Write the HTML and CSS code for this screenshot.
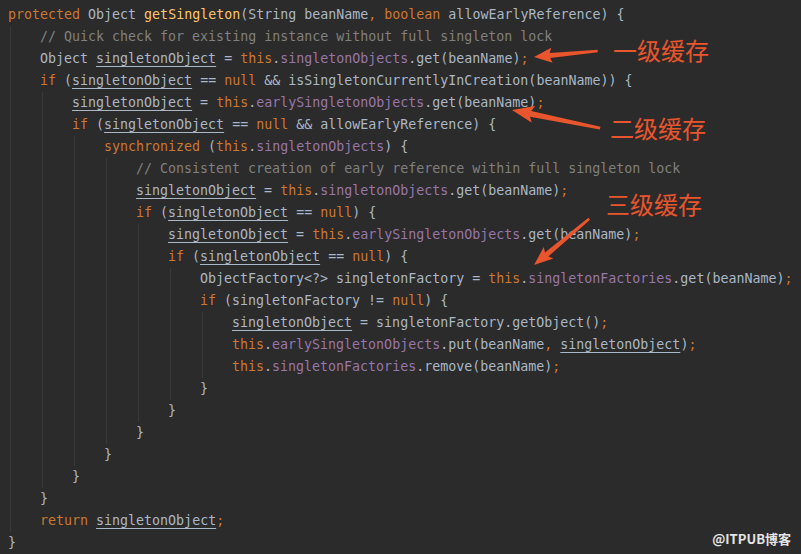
FILE: index.html
```html
<!DOCTYPE html>
<html lang="en">

<head>
    <meta charset="UTF-8">
    <meta name="viewport" content="width=device-width, initial-scale=1.0">
    <title>getSingleton</title>
    <link rel="stylesheet" href="styles.css">
</head>

<body>

    <div class="editor">
        <div class="code">
            <div class="line"><span class="kw">protected</span> Object <span class="fn">getSingleton</span>(String beanName<span class="kw">,</span> <span class="kw">boolean</span> allowEarlyReference) {</div>
            <div class="block">
                <div class="line"><span class="cm">// Quick check for existing instance without full singleton lock</span></div>
                <div class="line">Object <span class="var">singletonObject</span> = <span class="kw">this</span>.<span class="fd">singletonObjects</span>.get(beanName)<span class="kw">;</span></div>
                <div class="line"><span class="kw">if</span> (<span class="var">singletonObject</span> == <span class="kw">null</span> &amp;&amp; isSingletonCurrentlyInCreation(beanName)) {</div>
                <div class="block">
                    <div class="line"><span class="var">singletonObject</span> = <span class="kw">this</span>.<span class="fd">earlySingletonObjects</span>.get(beanName)<span class="kw">;</span></div>
                    <div class="line"><span class="kw">if</span> (<span class="var">singletonObject</span> == <span class="kw">null</span> &amp;&amp; allowEarlyReference) {</div>
                    <div class="block">
                        <div class="line"><span class="kw">synchronized</span> (<span class="kw">this</span>.<span class="fd">singletonObjects</span>) {</div>
                        <div class="block">
                            <div class="line"><span class="cm">// Consistent creation of early reference within full singleton lock</span></div>
                            <div class="line"><span class="var">singletonObject</span> = <span class="kw">this</span>.<span class="fd">singletonObjects</span>.get(beanName)<span class="kw">;</span></div>
                            <div class="line"><span class="kw">if</span> (<span class="var">singletonObject</span> == <span class="kw">null</span>) {</div>
                            <div class="block">
                                <div class="line"><span class="var">singletonObject</span> = <span class="kw">this</span>.<span class="fd">earlySingletonObjects</span>.get(beanName)<span class="kw">;</span></div>
                                <div class="line"><span class="kw">if</span> (<span class="var">singletonObject</span> == <span class="kw">null</span>) {</div>
                                <div class="block">
                                    <div class="line">ObjectFactory&lt;?&gt; singletonFactory = <span class="kw">this</span>.<span class="fd">singletonFactories</span>.get(beanName)<span class="kw">;</span></div>
                                    <div class="line"><span class="kw">if</span> (singletonFactory != <span class="kw">null</span>) {</div>
                                    <div class="block">
                                        <div class="line"><span class="var">singletonObject</span> = singletonFactory.getObject()<span class="kw">;</span></div>
                                        <div class="line"><span class="kw">this</span>.<span class="fd">earlySingletonObjects</span>.put(beanName<span class="kw">,</span> <span class="var">singletonObject</span>)<span class="kw">;</span></div>
                                        <div class="line"><span class="kw">this</span>.<span class="fd">singletonFactories</span>.remove(beanName)<span class="kw">;</span></div>
                                    </div>
                                    <div class="line">}</div>
                                </div>
                                <div class="line">}</div>
                            </div>
                            <div class="line">}</div>
                        </div>
                        <div class="line">}</div>
                    </div>
                    <div class="line">}</div>
                </div>
                <div class="line">}</div>
                <div class="line"><span class="kw">return</span> <span class="var">singletonObject</span><span class="kw">;</span></div>
            </div>
            <div class="line">}</div>
        </div>

        <!-- annotation arrows -->
        <svg class="arrows" width="801" height="554" viewBox="0 0 801 554">
            <polygon transform="translate(534 57) rotate(-5.4)" points="0,0 18,-7.5 16,-2.6 64,-1.3 64,1.3 16,2.6 18,7.5" />
            <polygon transform="translate(512 110) rotate(11.6)" points="0,0 22,-8.5 19,-3 90,-1.5 90,1.5 19,3 22,8.5" />
            <polygon transform="translate(534 265) rotate(-39.9)" points="0,0 19,-7.5 16.5,-2.6 72,-1.3 72,1.3 16.5,2.6 19,7.5" />
        </svg>
        <div class="note note-1">一级缓存</div>
        <div class="note note-2">二级缓存</div>
        <div class="note note-3">三级缓存</div>

        <div class="watermark">@ITPUB博客</div>
    </div>

</body>

</html>
```

FILE: styles.css
```css
body {
    margin: 0;
    background-color: #2b2b2b;
    overflow: hidden;
}

.editor {
    position: relative;
    width: 801px;
    height: 554px;
    background-color: #2b2b2b;
}

.code {
    padding: 4px 0 0 8px;
    font-family: 'DejaVu Sans Mono', 'Liberation Mono', monospace;
    font-size: 13.3px;
    color: #a9b7c6;
}

.line {
    height: 22px;
    line-height: 22px;
    white-space: pre;
}

/* indent guide sits on the left edge of each nested block */
.block {
    margin-left: 2px;
    padding-left: 29px;
    border-left: 1px solid #3a3a3a;
}

.kw {
    color: #cc7832;
}

.fn {
    color: #ffc66d;
}

.fd {
    color: #9876aa;
}

.cm {
    color: #808080;
}

.var {
    text-decoration: underline;
    text-underline-offset: 3px;
    text-decoration-thickness: 1px;
}

.arrows {
    position: absolute;
    top: 0;
    left: 0;
    pointer-events: none;
}

.arrows polygon {
    fill: #e9552c;
}

.note {
    position: absolute;
    font-family: 'Noto Sans CJK SC', sans-serif;
    font-size: 24px;
    line-height: 26px;
    color: #e9552c;
    white-space: nowrap;
}

.note-1 {
    left: 613px;
    top: 37px;
}

.note-2 {
    left: 610px;
    top: 115px;
}

.note-3 {
    left: 606px;
    top: 191px;
}

.watermark {
    position: absolute;
    right: 10px;
    top: 530px;
    font-family: 'Noto Sans CJK SC', sans-serif;
    font-size: 13px;
    font-weight: 700;
    line-height: 18px;
    color: #e4e4e4;
}
```
